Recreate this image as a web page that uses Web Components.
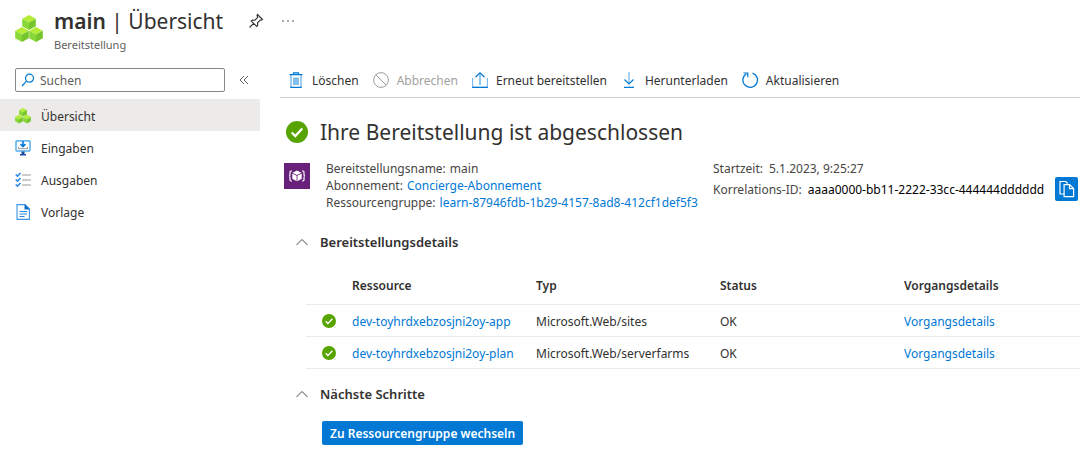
<!DOCTYPE html>
<html lang="de">
<head>
<meta charset="utf-8">
<meta name="viewport" content="width=device-width, initial-scale=1">
<title>main | Übersicht</title>
<style>
  body { margin: 0; background: #fff; color: #323130; font: 12px/17px "Noto Sans", "Open Sans", sans-serif;
    --link: #0078d4; --line: #edebe9; }
</style>
</head>
<body>
<deployment-page></deployment-page>
<script>
const cube = (x, y) => `<g transform="translate(${x} ${y})"><path fill="#b4ec36" d="M7 0l6.800 3.700L7 7.600.2 3.700z"/><path fill="#8ad838" d="M.2 3.700L7 7.600V15L.2 11.300z"/><path fill="#76c52d" d="M13.800 3.700L7 7.600V15l6.800-3.700z"/></g>`;
const ICONS = {
  cubes: ['0 0 28 28', cube(7, 0) + cube(0, 12) + cube(14, 12)],
  pin: ['0 0 16 16', '<g fill="none" stroke="#323130" stroke-width="1.100"><path d="M9.500 1.500l5 5-1.200.7-1-.2-2.800 2.800.2 2.700-1 1L3.200 8l1-1 2.700.2L9.700 4.400 9 2.500zM5.700 10.300L1.500 14.500"/></g>'],
  more: ['0 0 16 16', '<g fill="#484644"><circle cx="3" cy="8" r=".8"/><circle cx="8" cy="8" r=".8"/><circle cx="13" cy="8" r=".8"/></g>'],
  search: ['0 0 14 14', '<g fill="none" stroke="#0078d4" stroke-width="1.200"><circle cx="8.500" cy="5.200" r="4"/><path d="M5.600 8.200L1 13"/></g>'],
  collapse: ['0 0 10 10', '<path d="M5 1L1 5l4 4M9 1L5 5l4 4" fill="none" stroke="#605e5c"/>'],
  input: ['0 0 16 16', '<path d="M1 1h14v10H1z" fill="#fff" stroke="#5ea0ef"/><path d="M1 .8h14M1 .8v10M15 .8v10M1 11h14" stroke="#50b5e9"/><path d="M8 1v5M5.500 4L8 6.500 10.500 4" fill="none" stroke="#0078d4" stroke-width="1.600"/><path d="M3.500 7v1.700h9V7" fill="none" stroke="#999"/><path d="M6.500 11.500h3V14H11v1.500H5V14h1.500z" fill="#1b4fa0"/>'],
  output: ['0 0 16 16', '<g fill="none" stroke="#2b88e6" stroke-width="1.500"><path d="M.7 2.500l1.800 1.600L5.500 1M.7 7.500l1.800 1.600L5.500 6M.7 12.500l1.800 1.600L5.500 11"/></g><path d="M7 3h9M7 8h9M7 13h9" stroke="#999" stroke-width="1.200"/>'],
  template: ['0 0 16 16', '<path d="M2 .6h8l4.400 4.400v10.400H2z" fill="#fff" stroke="#3b94ec" stroke-width="1.100"/><path d="M9.500 0l5.500 5.500H9.500z" fill="#0f6cc4"/><path d="M4.500 7.500h7.500M4.500 10h7.500M4.500 12.500h5" stroke="#2b88e6" stroke-width="1.100"/>'],
  delete: ['0 0 16 16', '<path d="M5 5.500h6v7.500H5z" fill="#83bdeb"/><path d="M3 3v12.500h10V3" fill="none" stroke="#5ea9e4" stroke-width="1.200"/><path d="M1.500 2.700h13M5.500 2.500V.8h5v1.700M2.400 15.400h11.200" fill="none" stroke="#0078d4" stroke-width="1.200"/>'],
  cancel: ['0 0 16 16', '<g fill="none" stroke="#a19f9d"><circle cx="8" cy="8" r="7.400"/><path d="M2.800 2.800l10.400 10.400"/></g>'],
  redeploy: ['0 0 16 16', '<path d="M.6 6v9.400h14.800V6" fill="none" stroke="#83bdeb" stroke-width="1.200"/><path d="M.2 15.400h15.600M3.500 5.200L8 .8l4.500 4.400" fill="none" stroke="#0078d4" stroke-width="1.200"/><path d="M8 13V1.500" stroke="#4ba0e0" stroke-width="1.200"/>'],
  download: ['0 0 16 16', '<path d="M8 0v11" stroke="#83bdeb" stroke-width="1.400"/><path d="M3.500 7.500L8 12l4.500-4.500M3 15.400h10" fill="none" stroke="#0078d4" stroke-width="1.200"/>'],
  refresh: ['0 0 16 16', '<path d="M10.500 1.100A7.300 7.300 0 1 1 4.500 1.700" fill="none" stroke="#0078d4" stroke-width="1.300"/><path d="M1.500 1h4.300v4.300" fill="none" stroke="#0078d4" stroke-width="1.200"/>'],
  success: ['0 0 22 22', '<circle cx="11" cy="11" r="11" fill="#57a300"/><path d="M5.700 11.500l3.600 3.600 7-7.600" fill="none" stroke="#fff" stroke-width="2.200"/>'],
  resource: ['0 0 26 26', '<path d="M0 0h26v26H0z" fill="#68217a"/><path d="M8 8H7Q6 8 6 9.200v2.600Q6 13 5 13q1 0 1 1.200v2.600Q6 18 7 18h1M18 8h1q1 0 1 1.200v2.600q0 1.200 1 1.200-1 0-1 1.200v2.600q0 1.200-1 1.200h-1" fill="none" stroke="#fff" stroke-width="1.200"/><path d="M13 7.500l4.500 2.300-4.500 2.300-4.500-2.300zM8.300 10.600l4.300 2.200v5.400l-4.300-2.400zM17.700 10.600l-4.300 2.200v5.400l4.300-2.400z" fill="#fff"/>'],
  chevron: ['0 0 14 14', '<path d="M1.500 10L7 4.500l5.500 5.500" fill="none" stroke="#484644"/>'],
  copy: ['0 0 16 18', '<path d="M5.500 14H1.500V1.500h5.700l2 2" fill="none" stroke="#fff" stroke-width="1.200"/><path d="M5.600 4.600h5.500l4 4v8H5.600zM11 4.600v4h4" fill="none" stroke="#fff" stroke-width="1.200"/>']
};

class AzIcon extends HTMLElement {
  static observedAttributes = ['name'];
  constructor() {
    super();
    this.attachShadow({ mode: 'open' }).innerHTML =
      '<style>:host{display:block;flex:none;width:16px;height:16px}svg{display:block;width:100%;height:100%}</style><svg aria-hidden="true"></svg>';
  }
  attributeChangedCallback(attribute, previous, name) {
    if (!ICONS[name]) return;
    const svg = this.shadowRoot.querySelector('svg');
    svg.setAttribute('viewBox', ICONS[name][0]);
    svg.innerHTML = ICONS[name][1];
  }
}
customElements.define('az-icon', AzIcon);

function define(name, html, setup) {
  const template = document.createElement('template');
  template.innerHTML = html;
  customElements.define(name, class extends HTMLElement {
    constructor() {
      super();
      this.attachShadow({ mode: 'open' }).append(template.content.cloneNode(true));
    }
    connectedCallback() { if (setup) setup(this, this.shadowRoot); }
  });
}

define('blade-header', `<style>
  :host{display:flex;align-items:flex-start;padding:4px 15px 0;height:56px}
  .logo{width:28px;height:28px;margin:11px 11px 0 0}
  h1{margin:0;font-size:21px;line-height:34px;font-weight:600;color:#323130}
  h1 span{font-weight:400}
  p{margin:0;font-size:11px;line-height:14px;color:#605e5c}
  button{border:0;background:none;padding:0;margin:9px 0 0 25px}
  button + button{margin-left:16px}
</style>
<az-icon class="logo" name="cubes"></az-icon>
<div><h1>main <span>| Übersicht</span></h1><p>Bereitstellung</p></div>
<button aria-label="Anheften"><az-icon name="pin"></az-icon></button>
<button aria-label="Weitere Optionen"><az-icon name="more"></az-icon></button>`);

define('search-box', `<style>
  :host{display:flex;align-items:center;gap:14px;padding:8px 10px 7px 15px}
  label{display:flex;align-items:center;flex:none;width:210px;height:24px;box-sizing:border-box;border:1px solid #8a8886;border-radius:2px;padding:0 5px;gap:5px}
  label az-icon{width:14px;height:14px}
  input{flex:1;min-width:0;border:0;padding:0;outline:0;background:none;font:inherit;color:#323130}
  input::placeholder{color:#605e5c;opacity:1}
  button{border:0;background:none;padding:0}
  button az-icon{width:10px;height:10px}
</style>
<label><az-icon name="search"></az-icon><input type="text" placeholder="Suchen" aria-label="Suchen"></label>
<button aria-label="Menü einklappen"><az-icon name="collapse"></az-icon></button>`);

define('nav-item', `<style>
  :host{display:block}
  a{display:flex;align-items:center;gap:10px;height:32px;box-sizing:border-box;padding:2px 15px 0;color:#323130;text-decoration:none}
  :host([selected]) a{background:#edebe9}
</style><a href="#"><az-icon></az-icon><slot></slot></a>`,
  (host, root) => {
    root.querySelector('az-icon').setAttribute('name', host.getAttribute('icon'));
    if (host.hasAttribute('selected')) root.querySelector('a').setAttribute('aria-current', 'page');
  });

define('side-menu', `<style>:host{display:block;flex:none;width:260px}</style>
<search-box></search-box>
<nav aria-label="Bereitstellung">
  <nav-item icon="cubes" selected>Übersicht</nav-item>
  <nav-item icon="input">Eingaben</nav-item>
  <nav-item icon="output">Ausgaben</nav-item>
  <nav-item icon="template">Vorlage</nav-item>
</nav>`);

define('command-button', `<style>
  :host{display:block}
  button{display:flex;align-items:center;gap:8px;border:0;background:none;padding:0;font:inherit;color:#323130;white-space:nowrap}
  button:disabled{color:#a19f9d}
</style><button><az-icon></az-icon><slot></slot></button>`,
  (host, root) => {
    root.querySelector('az-icon').setAttribute('name', host.getAttribute('icon'));
    root.querySelector('button').disabled = host.hasAttribute('disabled');
  });

define('command-bar', `<style>
  :host{display:flex;align-items:center;gap:14px;height:38px;padding:3px 8px 0;box-sizing:border-box;border-bottom:1px solid #d2d0ce}
</style>
<command-button icon="delete">Löschen</command-button>
<command-button icon="cancel" disabled>Abbrechen</command-button>
<command-button icon="redeploy">Erneut bereitstellen</command-button>
<command-button icon="download">Herunterladen</command-button>
<command-button icon="refresh">Aktualisieren</command-button>`);

define('status-title', `<style>
  :host{display:flex;align-items:center;gap:12px;padding:18px 6px 12px}
  az-icon{width:22px;height:22px}
  h2{margin:0;font-size:21px;line-height:32px;font-weight:400;color:#323130}
</style><az-icon name="success"></az-icon><h2><slot></slot></h2>`);

define('deployment-info', `<style>
  :host{display:flex;padding:0 2px 0 4px;color:#484644;white-space:nowrap}
  .logo{width:26px;height:26px;margin:3px 16px 0 0}
  dl{margin:0}
  .main{flex:none;width:387px}
  dl div{display:flex;gap:4px}
  dt,dd{margin:0}
  a{color:var(--link);text-decoration:none}
  .side{flex:1}
  .side div{align-items:center;gap:6px}
  .id{color:#000}
  button{width:23px;height:24px;border:0;border-radius:2px;background:#0078d4;padding:3px;margin-left:auto}
  button az-icon{width:17px;height:18px}
</style>
<az-icon class="logo" name="resource"></az-icon>
<dl class="main">
  <div><dt>Bereitstellungsname:</dt><dd>main</dd></div>
  <div><dt>Abonnement:</dt><dd><a href="#">Concierge-Abonnement</a></dd></div>
  <div><dt>Ressourcengruppe:</dt><dd><a href="#">learn-87946fdb-1b29-4157-8ad8-412cf1def5f3</a></dd></div>
</dl>
<dl class="side">
  <div><dt>Startzeit:</dt><dd>5.1.2023, 9:25:27</dd></div>
  <div><dt>Korrelations-ID:</dt><dd class="id">aaaa0000-bb11-2222-33cc-444444dddddd</dd><button aria-label="Korrelations-ID kopieren"><az-icon name="copy"></az-icon></button></div>
</dl>`);

define('page-section', `<style>
  :host{display:block}
  h3{margin:0;font-size:13px;line-height:18px;font-weight:600;color:#323130}
  button{display:flex;align-items:center;gap:11px;border:0;background:none;padding:0 0 0 15px;font:inherit;color:inherit}
  az-icon{width:14px;height:14px}
</style><h3><button aria-expanded="true"><az-icon name="chevron"></az-icon><slot name="title"></slot></button></h3><slot></slot>`);

define('resource-table', `<style>
  :host{display:block;margin:18px 0 0 26px}
  table{width:100%;border-collapse:collapse;table-layout:fixed;color:#323130}
  .state{width:46px}
  .field{width:184px}
  th,td{height:30px;padding:1px 0 0;border-bottom:1px solid var(--line);text-align:left;white-space:nowrap}
  th{height:33px;padding:0 0 2px;font-weight:600}
  a{color:var(--link);text-decoration:none}
  az-icon{width:14px;height:14px;margin-left:16px}
</style>
<table>
  <colgroup><col class="state"><col class="field"><col class="field"><col class="field"><col></colgroup>
  <thead><tr><th aria-label="Zustand"></th><th>Ressource</th><th>Typ</th><th>Status</th><th>Vorgangsdetails</th></tr></thead>
  <tbody>
    <tr><td><az-icon name="success"></az-icon></td><td><a href="#">dev-toyhrdxebzosjni2oy-app</a></td><td>Microsoft.Web/sites</td><td>OK</td><td><a href="#">Vorgangsdetails</a></td></tr>
    <tr><td><az-icon name="success"></az-icon></td><td><a href="#">dev-toyhrdxebzosjni2oy-plan</a></td><td>Microsoft.Web/serverfarms</td><td>OK</td><td><a href="#">Vorgangsdetails</a></td></tr>
  </tbody>
</table>`);

define('primary-button', `<style>
  :host{display:block}
  button{height:24px;border:0;border-radius:2px;padding:0 8px;background:#0078d4;color:#fff;font:inherit;font-weight:600}
</style><button><slot></slot></button>`);

define('deployment-page', `<style>
  :host{display:block}
  .body{display:flex;gap:20px}
  main{flex:1;min-width:0}
  .details{margin-top:22px}
  .next{margin-top:16px}
  primary-button{margin:18px 0 8px 42px}
</style>
<blade-header></blade-header>
<div class="body">
  <side-menu></side-menu>
  <main>
    <command-bar></command-bar>
    <status-title>Ihre Bereitstellung ist abgeschlossen</status-title>
    <deployment-info></deployment-info>
    <page-section class="details"><span slot="title">Bereitstellungsdetails</span><resource-table></resource-table></page-section>
    <page-section class="next"><span slot="title">Nächste Schritte</span><primary-button>Zu Ressourcengruppe wechseln</primary-button></page-section>
  </main>
</div>`);
</script>
</body>
</html>
